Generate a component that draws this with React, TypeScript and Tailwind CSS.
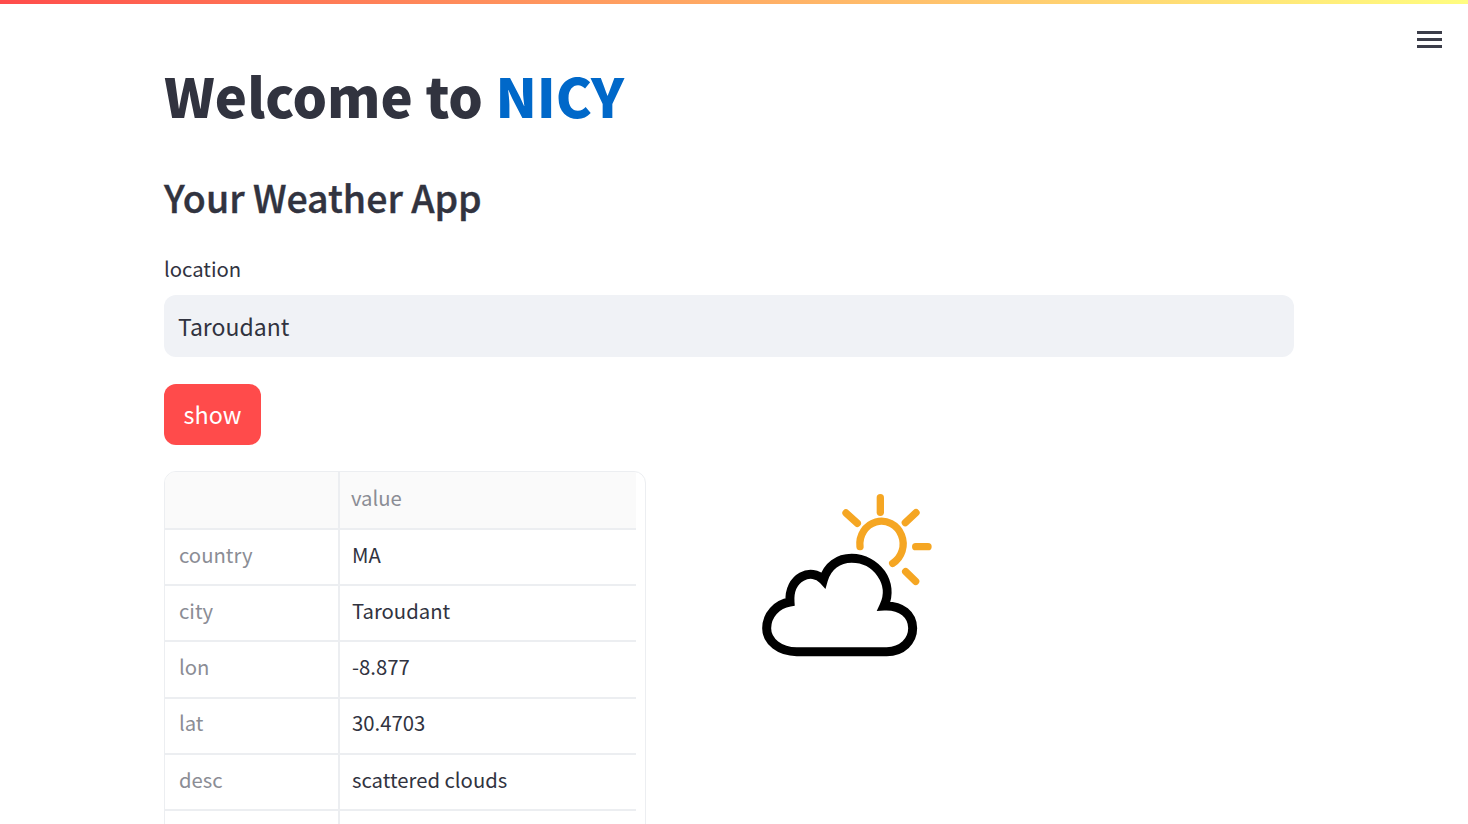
const rows: [string, string][] = [
  ["country", "MA"],
  ["city", "Taroudant"],
  ["lon", "-8.877"],
  ["lat", "30.4703"],
  ["desc", "scattered clouds"],
  ["", ""],
];

function WeatherIcon() {
  return (
    <svg viewBox="0 0 630 570" className="w-[210px] h-[190px] block" fill="none" strokeLinecap="round">
      <g stroke="#f5a623" strokeWidth="22">
        <path d="M360 200 A65 68 0 1 1 458 250" />
        <path d="M421 53 V97" />
        <path d="M496 128 L528 98" />
        <path d="M527 200 H564" />
        <path d="M497 275 L527 304" />
        <path d="M318 99 L352 130" />
      </g>
      <path
        d="M170 515 H440 C488 515 518 482 518 445 C518 405 485 375 432 378 C464 310 410 235 335 235 C295 235 262 258 250 300 C215 262 145 290 150 366 C110 372 80 405 80 445 C80 485 120 515 170 515 Z"
        fill="#ffffff"
        stroke="#000000"
        strokeWidth="27"
        strokeLinejoin="miter"
      />
    </svg>
  );
}

export default function App() {
  return (
    <div className="relative h-[824px] overflow-hidden bg-white text-[#31333f] font-['Noto_Sans_CJK_SC','Noto_Sans',sans-serif]">
      <div className="h-[4px] bg-gradient-to-r from-[#ff4b4b] to-[#fffd80]" />
      <button className="absolute right-[26px] top-[31px] flex flex-col gap-[4px]" aria-label="menu">
        <span className="block w-[25px] h-[3px] bg-[#3b3d49]" />
        <span className="block w-[25px] h-[3px] bg-[#3b3d49]" />
        <span className="block w-[25px] h-[3px] bg-[#3b3d49]" />
      </button>
      <main className="pl-[164px] pr-[174px]">
        <h1 className="mt-[56px] text-[54.3px] leading-[70px] font-black">
          Welcome to <span className="text-[#0068c9]">NICY</span>
        </h1>
        <h2 className="mt-[42px] text-[37.5px] leading-[50px] font-medium [-webkit-text-stroke:0.4px_#31333f]">Your Weather App</h2>
        <label className="block mt-[31px] text-[20.3px] leading-[30px]">location</label>
        <div className="mt-[12px] h-[62px] rounded-[12px] bg-[#f0f2f6] px-[14px] flex items-center text-[23px]">
          Taroudant
        </div>
        <button className="block mt-[27px] w-[97px] h-[61px] rounded-[12px] bg-[#ff4b4b] text-white text-[23.3px]">
          show
        </button>
        <div className="mt-[26px] flex items-start">
          <div className="w-[482px] h-[420px] shrink-0 rounded-[12px] border border-[#eceef1] overflow-hidden">
            <table className="w-[471px] table-fixed border-collapse text-[20.3px]">
              <colgroup>
                <col className="w-[174px]" />
                <col />
              </colgroup>
              <thead>
                <tr className="h-[57px] bg-[#fafafa] border-b-2 border-[#eceef1]">
                  <th className="border-r-2 border-[#eceef1]" />
                  <th className="pl-[11px] pb-[5px] text-left font-normal text-[#8b8d95]">value</th>
                </tr>
              </thead>
              <tbody>
                {rows.map(([k, v], i) => (
                  <tr key={i} className="h-[56.2px] border-b-2 border-[#eceef1]">
                    <td className="border-r-2 border-[#eceef1] pl-[14px] pb-[6px] text-[#8b8d95]">{k}</td>
                    <td className="pl-[12px] pb-[6px]">{v}</td>
                  </tr>
                ))}
              </tbody>
            </table>
          </div>
          <div className="ml-[94px] mt-[9px]">
            <WeatherIcon />
          </div>
        </div>
      </main>
    </div>
  );
}
